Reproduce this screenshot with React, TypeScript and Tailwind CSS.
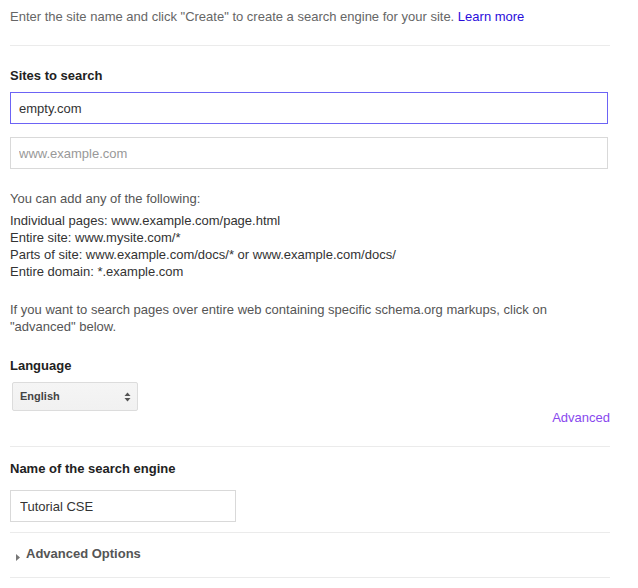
import { useState } from 'react'

const EXAMPLES = [
  'Individual pages: www.example.com/page.html',
  'Entire site: www.mysite.com/*',
  'Parts of site: www.example.com/docs/* or www.example.com/docs/',
  'Entire domain: *.example.com',
]

export default function App() {
  const [site, setSite] = useState('empty.com')
  const [extra, setExtra] = useState('')
  const [name, setName] = useState('Tutorial CSE')
  const [lang, setLang] = useState('English')

  return (
    <div className="min-h-screen bg-white font-['Liberation_Sans',Arial,sans-serif] text-[13px] leading-[17px] text-[#333]">
      <div className="ml-[10px] w-[600px]">
        {/* Intro */}
        <div className="pt-[8px] pb-[20px] border-b border-[#ebebeb] text-[#666]">
          Enter the site name and click "Create" to create a search engine for your site.{' '}
          <a href="#" className="text-[#2a0ddb]">Learn more</a>
        </div>

        {/* Sites */}
        <div className="mt-[21px] font-bold text-[#222]">Sites to search</div>
        <input
          value={site}
          onChange={e => setSite(e.target.value)}
          className="mt-[8px] block w-[598px] h-[32px] px-[8px] border border-[#6c63f5] outline-none text-[#333]"
        />
        <input
          value={extra}
          onChange={e => setExtra(e.target.value)}
          placeholder="www.example.com"
          className="mt-[13px] block w-[598px] h-[32px] px-[8px] border border-[#d9d9d9] outline-none placeholder:text-[#999]"
        />

        <div className="mt-[21px] text-[#555]">You can add any of the following:</div>
        <div className="mt-[5px] text-[#333]">
          {EXAMPLES.map(line => (
            <div key={line}>{line}</div>
          ))}
        </div>
        <p className="mt-[21px] text-[#555]">
          If you want to search pages over entire web containing specific schema.org markups, click on
          "advanced" below.
        </p>

        {/* Language */}
        <div className="mt-[22px] font-bold text-[#222]">Language</div>
        <div className="flex items-start justify-between pb-[20px] border-b border-[#ebebeb]">
          <div className="relative ml-[2px] mt-[8px]">
            <select
              value={lang}
              onChange={e => setLang(e.target.value)}
              className="appearance-none w-[126px] h-[29px] pl-[7px] rounded-[2px] border border-[#dcdcdc] bg-gradient-to-b from-[#f5f5f5] to-[#f1f1f1] text-[11px] font-bold text-[#444] outline-none"
            >
              <option>English</option>
              <option>Deutsch</option>
              <option>Français</option>
            </select>
            <svg className="pointer-events-none absolute right-[7px] top-[10px]" width="7" height="10" viewBox="0 0 7 10">
              <path d="M3.5 0.5 L6.5 4 L0.5 4 Z" fill="#555" />
              <path d="M0.5 6 L6.5 6 L3.5 9.5 Z" fill="#555" />
            </svg>
          </div>
          <a href="#" className="mt-[35px] text-[#8848ee]">Advanced</a>
        </div>

        {/* Name */}
        <div className="mt-[13px] font-bold text-[#222]">Name of the search engine</div>
        <div className="pb-[10px] border-b border-[#ebebeb]">
          <input
            value={name}
            onChange={e => setName(e.target.value)}
            className="mt-[13px] block w-[226px] h-[32px] px-[9px] border border-[#d9d9d9] outline-none text-[#333]"
          />
        </div>

        {/* Advanced options */}
        <div className="flex items-center pt-[12px] pb-[15px] border-b border-[#ebebeb]">
          <svg className="ml-[6px] mt-[7px] mr-[6px]" width="4" height="7" viewBox="0 0 4 7">
            <path d="M0 0 L4 3.5 L0 7 Z" fill="#777" />
          </svg>
          <span className="font-bold text-[#555]">Advanced Options</span>
        </div>
      </div>
    </div>
  )
}
